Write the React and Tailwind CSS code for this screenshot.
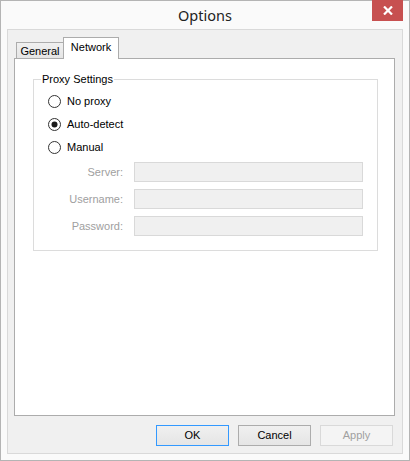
import React from "react";

function Radio({ checked, label }) {
  return (
    <div className="flex h-[23px] items-center pl-[14px]">
      <svg width="13" height="13" viewBox="0 0 13 13" className="shrink-0">
        <circle cx="6.5" cy="6.5" r="6" fill="#ffffff" stroke="#333333" strokeWidth="1" />
        {checked && <circle cx="6.5" cy="6.5" r="3" fill="#1a1a1a" />}
      </svg>
      <span className="ml-[6px] text-[11px] leading-[13px] text-black">{label}</span>
    </div>
  );
}

function Field({ label }) {
  return (
    <div className="flex items-center">
      <div className="w-[89px] text-right text-[11px] leading-[13px] text-[#a0a0a0]">{label}</div>
      <div className="ml-[11px] h-[20px] flex-1 border border-[#d9d9d9] bg-[#f0f0f0]" />
    </div>
  );
}

function Btn({ children, variant }) {
  const cls =
    variant === "default"
      ? "border-[#3399ff] bg-gradient-to-b from-[#f0f0f0] to-[#e5e5e5] text-black"
      : variant === "disabled"
      ? "border-[#d9d9d9] bg-[#f4f4f4] text-[#a0a0a0]"
      : "border-[#acacac] bg-gradient-to-b from-[#f0f0f0] to-[#e5e5e5] text-black";
  return (
    <div className={`flex h-[21px] w-[73px] items-center justify-center border text-[11px] ${cls}`}>
      {children}
    </div>
  );
}

export default function App() {
  return (
    <div className="relative flex h-[461px] w-[410px] flex-col border border-[#b4b4b4] bg-[#fafafa] font-['Liberation_Sans',Arial,sans-serif]">
      {/* Title bar */}
      <div className="flex h-[28px] shrink-0 items-center justify-center pb-[1px]">
        <span className="font-['Noto_Sans',sans-serif] text-[14.5px] leading-[20px] text-[#222]">Options</span>
      </div>
      <div className="absolute right-[6px] top-[-1px] flex h-[21px] w-[31px] items-center justify-center bg-[#c75050]">
        <svg width="10" height="9" viewBox="0 0 10 9">
          <path d="M1 0.5 L9 8.5 M9 0.5 L1 8.5" stroke="#ffffff" strokeWidth="2.2" />
        </svg>
      </div>

      {/* Client area */}
      <div className="mx-[6px] mb-[6px] flex flex-1 flex-col border border-[#d9d9d9] bg-[#f0f0f0]">
        {/* Tab control */}
        <div className="ml-[6px] mr-[7px] mt-[7px] flex flex-col">
          <div className="relative z-10 flex h-[21px] items-end pl-[2px]">
            <div className="flex h-[16px] w-[48px] items-center justify-center border border-b-0 border-[#acacac] bg-gradient-to-b from-[#f0f0f0] to-[#e5e5e5] pt-[1px] text-[11px] text-black">
              General
            </div>
            <div className="-mb-px -ml-px flex h-[22px] w-[56px] items-center justify-center border border-b-0 border-[#acacac] bg-white pb-[2px] text-[11px] text-black">
              Network
            </div>
          </div>
          <div className="h-[358px] border border-[#acacac] bg-white">
            {/* Group box */}
            <div className="relative ml-[18px] mr-[16px] mt-[20px] h-[172px] border border-[#dcdcdc]">
              <div className="absolute left-[7px] top-[-9px] bg-white px-[1px] text-[11px] leading-[16px] text-black">
                Proxy Settings
              </div>
              <div className="flex flex-col pt-[10px]">
                <Radio label="No proxy" />
                <Radio label="Auto-detect" checked />
                <Radio label="Manual" />
              </div>
              <div className="mr-[14px] mt-[3px] flex flex-col gap-[7px]">
                <Field label="Server:" />
                <Field label="Username:" />
                <Field label="Password:" />
              </div>
            </div>
          </div>
        </div>

        {/* Buttons */}
        <div className="mt-[9px] flex justify-end gap-[9px] pr-[9px]">
          <Btn variant="default">OK</Btn>
          <Btn>Cancel</Btn>
          <Btn variant="disabled">Apply</Btn>
        </div>
      </div>
    </div>
  );
}
